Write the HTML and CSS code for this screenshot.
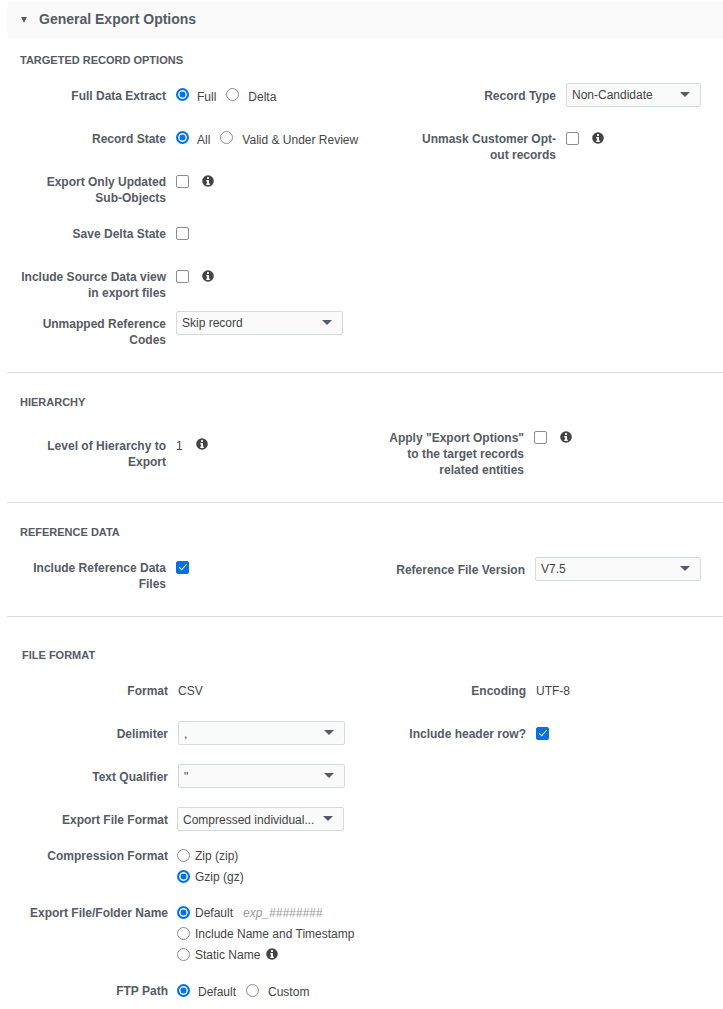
FILE: index.html
```html
<!DOCTYPE html>
<html lang="en">
<head>
    <meta charset="UTF-8">
    <title>General Export Options</title>
    <link rel="stylesheet" href="styles.css">
</head>
<body>
    <svg class="defs" width="0" height="0">
        <symbol id="info" viewBox="0 0 12 12">
            <circle cx="6" cy="6" r="5.8" fill="#444"/>
            <rect x="5" y="2" width="2" height="2" rx="0.6" fill="#fff"/>
            <path d="M4.3 5h2.7v3.6h.8V10H4.3V8.6h.8V6.4h-.8z" fill="#fff"/>
        </symbol>
    </svg>

    <div class="panel-header"><span class="caret"></span><h1>General Export Options</h1></div>

    <section class="section first">
        <h2>Targeted Record Options</h2>
        <div class="cols">
            <div class="col col-wide">
                <div class="field">
                    <label>Full Data Extract</label>
                    <div class="control">
                        <input type="radio" name="extract" checked><span class="opt">Full</span>
                        <input type="radio" name="extract"><span class="opt">Delta</span>
                    </div>
                </div>
                <div class="field">
                    <label>Record State</label>
                    <div class="control">
                        <input type="radio" name="state" checked><span class="opt">All</span>
                        <input type="radio" name="state"><span class="opt">Valid &amp; Under Review</span>
                    </div>
                </div>
                <div class="field gap-20">
                    <label>Export Only Updated Sub-Objects</label>
                    <div class="control"><input type="checkbox"><svg class="info"><use href="#info"/></svg></div>
                </div>
                <div class="field">
                    <label>Save Delta State</label>
                    <div class="control"><input type="checkbox"></div>
                </div>
                <div class="field gap-15">
                    <label>Include Source Data view in export files</label>
                    <div class="control"><input type="checkbox"><svg class="info"><use href="#info"/></svg></div>
                </div>
                <div class="field last">
                    <label>Unmapped Reference Codes</label>
                    <div class="select select-lg">Skip record</div>
                </div>
            </div>
            <div class="col col-right">
                <div class="field">
                    <label>Record Type</label>
                    <div class="select select-sm">Non-Candidate</div>
                </div>
                <div class="field">
                    <label>Unmask Customer Opt-out records</label>
                    <div class="control"><input type="checkbox"><svg class="info"><use href="#info"/></svg></div>
                </div>
            </div>
        </div>
    </section>

    <section class="section hierarchy">
        <h2>Hierarchy</h2>
        <div class="cols">
            <div class="col col-narrow">
                <div class="field last">
                    <label>Level of Hierarchy to Export</label>
                    <div class="control"><span class="value">1</span><svg class="info"><use href="#info"/></svg></div>
                </div>
            </div>
            <div class="col">
                <div class="field last up">
                    <label>Apply "Export Options" to the target records related entities</label>
                    <div class="control"><input type="checkbox"><svg class="info"><use href="#info"/></svg></div>
                </div>
            </div>
        </div>
    </section>

    <section class="section">
        <h2>Reference Data</h2>
        <div class="cols">
            <div class="col col-narrow">
                <div class="field last">
                    <label>Include Reference Data Files</label>
                    <div class="control"><input type="checkbox" checked></div>
                </div>
            </div>
            <div class="col">
                <div class="field last down">
                    <label>Reference File Version</label>
                    <div class="select select-lg">V7.5</div>
                </div>
            </div>
        </div>
    </section>

    <section class="section format">
        <h2>File Format</h2>
        <div class="cols">
            <div class="col col-narrow">
                <div class="field">
                    <label>Format</label>
                    <div class="control"><span class="value">CSV</span></div>
                </div>
                <div class="field">
                    <label>Delimiter</label>
                    <div class="select select-lg shifted">,</div>
                </div>
                <div class="field">
                    <label>Text Qualifier</label>
                    <div class="select select-lg shifted">"</div>
                </div>
                <div class="field gap-20">
                    <label>Export File Format</label>
                    <div class="select select-lg">Compressed individual...</div>
                </div>
                <div class="field gap-20">
                    <label>Compression Format</label>
                    <div class="stack">
                        <div class="control"><input type="radio" name="comp"><span class="opt opt-close">Zip (zip)</span></div>
                        <div class="control"><input type="radio" name="comp" checked><span class="opt opt-close">Gzip (gz)</span></div>
                    </div>
                </div>
                <div class="field gap-20">
                    <label>Export File/Folder Name</label>
                    <div class="stack">
                        <div class="control"><input type="radio" name="file" checked><span class="opt opt-close">Default</span><em class="hint">exp_########</em></div>
                        <div class="control"><input type="radio" name="file"><span class="opt opt-close">Include Name and Timestamp</span></div>
                        <div class="control"><input type="radio" name="file"><span class="opt opt-close">Static Name</span><svg class="info info-inline"><use href="#info"/></svg></div>
                    </div>
                </div>
                <div class="field last">
                    <label>FTP Path</label>
                    <div class="control">
                        <input type="radio" name="ftp" checked><span class="opt">Default</span>
                        <input type="radio" name="ftp"><span class="opt">Custom</span>
                    </div>
                </div>
            </div>
            <div class="col">
                <div class="field">
                    <label>Encoding</label>
                    <div class="control"><span class="value">UTF-8</span></div>
                </div>
                <div class="field">
                    <label>Include header row?</label>
                    <div class="control"><input type="checkbox" checked></div>
                </div>
            </div>
        </div>
    </section>
</body>
</html>
```

FILE: styles.css
```css
body {
    margin: 0;
    padding: 2px 0 0 7px;
    background-color: #fff;
    font-family: "Liberation Sans", Arial, sans-serif;
    font-size: 12px;
    line-height: 16px;
    color: #444;
}
.defs {
    position: absolute;
}
.panel-header {
    display: flex;
    align-items: center;
    box-sizing: border-box;
    height: 36px;
    padding: 0 0 2px 14px;
    background-color: #fafafa;
}
.caret {
    width: 0;
    height: 0;
    border-left: 3px solid transparent;
    border-right: 3px solid transparent;
    border-top: 6px solid #545b64;
    margin-right: 12px;
    margin-top: 2px;
}
h1 {
    margin: 0;
    font-size: 14px;
    font-weight: bold;
    color: #545b64;
}
h2 {
    margin: 0 0 19px;
    font-size: 11px;
    line-height: 16px;
    font-weight: bold;
    text-transform: uppercase;
    color: #545b64;
}
.section {
    padding: 21px 0 25px 13px;
    border-bottom: 1px solid #ddd;
}
.section.first {
    padding: 14px 0 25px 13px;
}
.col-right {
    padding-top: 1px;
}
.col-right .control {
    margin-top: -1px;
}
.section.hierarchy h2 {
    margin-bottom: 27px;
}
.section.format {
    padding: 30px 0 0 15px;
    border-bottom: none;
}
.section.format .field {
    gap: 9px;
}
.section.format .col + .col .field {
    gap: 10px;
}
.section.format .col-narrow .value {
    margin-left: 1px;
}
.section.format .select {
    margin: -4px 0;
    padding-top: 4px;
}
.section.format .select.shifted {
    margin-left: 1px;
}
.section.format .field.last input {
    margin-top: 0;
}
.cols {
    display: flex;
}
.col-wide {
    width: 396px;
}
.col-narrow {
    width: 364px;
}
.field {
    display: flex;
    align-items: flex-start;
    gap: 10px;
    margin-bottom: 27px;
}
.field.gap-20 {
    margin-bottom: 20px;
}
.field.gap-15 {
    margin-bottom: 15px;
}
.field.last {
    margin-bottom: 0;
}
.field.up {
    margin-top: -8px;
}
.field.down {
    margin-top: 3px;
    padding-left: 1px;
}
.field.down .select-lg {
    width: 166px;
}
label {
    flex: none;
    width: 146px;
    margin: 1px 0 -1px;
    text-align: right;
    font-weight: bold;
    color: #545b64;
}
.col + .col label {
    width: 140px;
}
.col-right label,
.field.down label {
    margin: 0;
}
.control {
    display: flex;
    align-items: center;
    height: 16px;
}
.stack {
    display: flex;
    flex-direction: column;
    gap: 5px;
}
input {
    appearance: none;
    flex: none;
    width: 13px;
    height: 13px;
    margin: 0;
    background-color: #fff;
    border: 1px solid #8d8d8d;
}
input[type="radio"] {
    border-radius: 50%;
    margin-top: -2px;
}
.stack input[type="radio"] {
    margin-top: 0;
}
.opt ~ input[type="radio"] {
    margin-left: 1px;
}
input[type="radio"]:checked {
    border: 2px solid #0073e6;
    background-color: #0073e6;
    box-shadow: inset 0 0 0 1.5px #fff;
}
input[type="checkbox"] {
    border-radius: 2px;
}
input[type="checkbox"]:checked {
    position: relative;
    background-color: #0a6fe0;
    border-color: #0a6fe0;
}
input[type="checkbox"]:checked::after {
    content: "";
    position: absolute;
    left: 3.5px;
    top: 0.5px;
    width: 3px;
    height: 7px;
    border: solid #fff;
    border-width: 0 1.5px 1.5px 0;
    transform: rotate(42deg);
}
.opt {
    margin: 3px 9px 0 8px;
}
.opt ~ input + .opt {
    margin-left: 9px;
}
.stack .opt-close {
    margin: 2px 0 0 5px;
}
.stack .control:first-child .opt-close {
    margin-top: 2px;
}
.value {
    padding-top: 2px;
    white-space: nowrap;
}
.col-narrow .field .value + .info {
    margin: -2px 0 0 13px;
}
.hint {
    margin: 2px 0 0 10px;
    color: #999;
}
.info {
    flex: none;
    width: 12px;
    height: 12px;
    margin-left: 13px;
}
.stack .info-inline {
    margin-left: 6px;
}
.select {
    position: relative;
    flex: none;
    box-sizing: border-box;
    height: 24px;
    margin: -5px 0 -3px;
    padding: 3px 5px;
    background-color: #fafafa;
    border: 1px solid #d5dbdb;
    border-radius: 2px;
    color: #444;
}
.col-wide .select {
    margin: -4px 0;
}
.select::after {
    content: "";
    position: absolute;
    right: 10px;
    top: 8px;
    border-left: 5px solid transparent;
    border-right: 5px solid transparent;
    border-top: 5px solid #545b64;
}
.select-lg {
    width: 167px;
}
.select-sm {
    width: 135px;
}
```
